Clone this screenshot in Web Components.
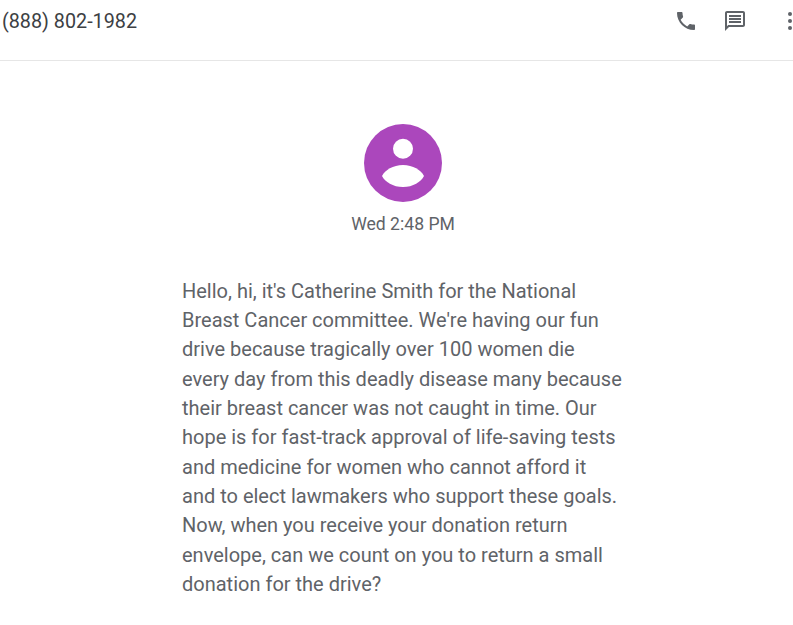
<!DOCTYPE html>
<html><head><meta charset="utf-8"><style>
html,body{margin:0;padding:0;background:#fff;overflow:hidden;height:625px}
body{font-family:Roboto,"Liberation Sans",sans-serif}
</style></head><body>
<msg-app>
<msg-header slot="header" number="(888) 802-1982"></msg-header>
<msg-thread>
<msg-avatar></msg-avatar>
<msg-time>Wed 2:48 PM</msg-time>
<msg-body>Hello, hi, it's Catherine Smith for the National Breast Cancer committee. We're having our fun drive because tragically over 100 women die every day from this deadly disease many because their breast cancer was not caught in time. Our hope is for fast-track approval of life-saving tests and medicine for women who cannot afford it and to elect lawmakers who support these goals. Now, when you receive your donation return envelope, can we count on you to return a small donation for the drive?</msg-body>
</msg-thread>
</msg-app>
<script>
function def(name,html){customElements.define(name,class extends HTMLElement{constructor(){super();this.attachShadow({mode:'open'}).innerHTML=html;}});}
def('msg-app',`<style>:host{display:block;width:806px;height:625px}</style><slot name="header"></slot><slot></slot>`);
customElements.define('msg-header',class extends HTMLElement{connectedCallback(){if(this.shadowRoot)return;this.attachShadow({mode:'open'}).innerHTML=`<style>
:host{display:flex;align-items:center;justify-content:space-between;box-sizing:border-box;height:61px;border-bottom:1px solid #e6e6e6;padding:0 4px 18px 2px}
.n{font-size:19.75px;color:#3c4043;line-height:24px;padding-top:1px}
.i{display:flex;align-items:center}
.i svg:nth-child(2){margin:0 31px 0 25px}
svg{width:24px;height:24px;fill:#5f6368;display:block}
</style><span class="n">${this.getAttribute('number')}</span><div class="i">
<svg viewBox="0 0 24 24"><path d="M6.62 10.79c1.44 2.83 3.76 5.14 6.59 6.59l2.2-2.2c.27-.27.67-.36 1.02-.24 1.12.37 2.33.57 3.57.57.55 0 1 .45 1 1V20c0 .55-.45 1-1 1-9.39 0-17-7.61-17-17 0-.55.45-1 1-1h3.5c.55 0 1 .45 1 1 0 1.25.2 2.45.57 3.57.11.35.03.74-.25 1.02l-2.2 2.2z"/></svg>
<svg viewBox="0 0 24 24"><path d="M20 2H4c-1.1 0-1.99.9-1.99 2L2 22l4-4h14c1.1 0 2-.9 2-2V4c0-1.1-.9-2-2-2zm0 14H5.17L4 17.17V4h16v12zM6 12h12v2H6zm0-3h12v2H6zm0-3h12v2H6z"/></svg>
<svg viewBox="0 0 24 24"><circle cx="12" cy="5" r="2"/><circle cx="12" cy="12" r="2"/><circle cx="12" cy="19" r="2"/></svg>
</div>`;}});
def('msg-thread',`<style>:host{display:flex;flex-direction:column;align-items:center;padding-top:63px}</style><slot></slot>`);
def('msg-avatar',`<style>:host{display:block;width:78px;height:78px}svg{display:block}</style><svg width="78" height="78" viewBox="0 0 78 78"><circle cx="39" cy="39" r="39" fill="#ab47bc"/><circle cx="39" cy="24.700" r="10" fill="#fff"/><path d="M18 52C21 46 29 41 39 41C49 41 57 46 60 52C57 58 49 63 39 63C29 63 21 58 18 52Z" fill="#fff"/></svg>`);
def('msg-time',`<style>:host{display:block;margin-top:11px;font-size:17.6px;line-height:22px;color:#5f6368}</style><slot></slot>`);
def('msg-body',`<style>:host{display:block;box-sizing:border-box;width:442px;margin-top:41.6px;font-size:20px;line-height:29.35px;color:#5f6368}</style><slot></slot>`);
</script>
</body></html>
